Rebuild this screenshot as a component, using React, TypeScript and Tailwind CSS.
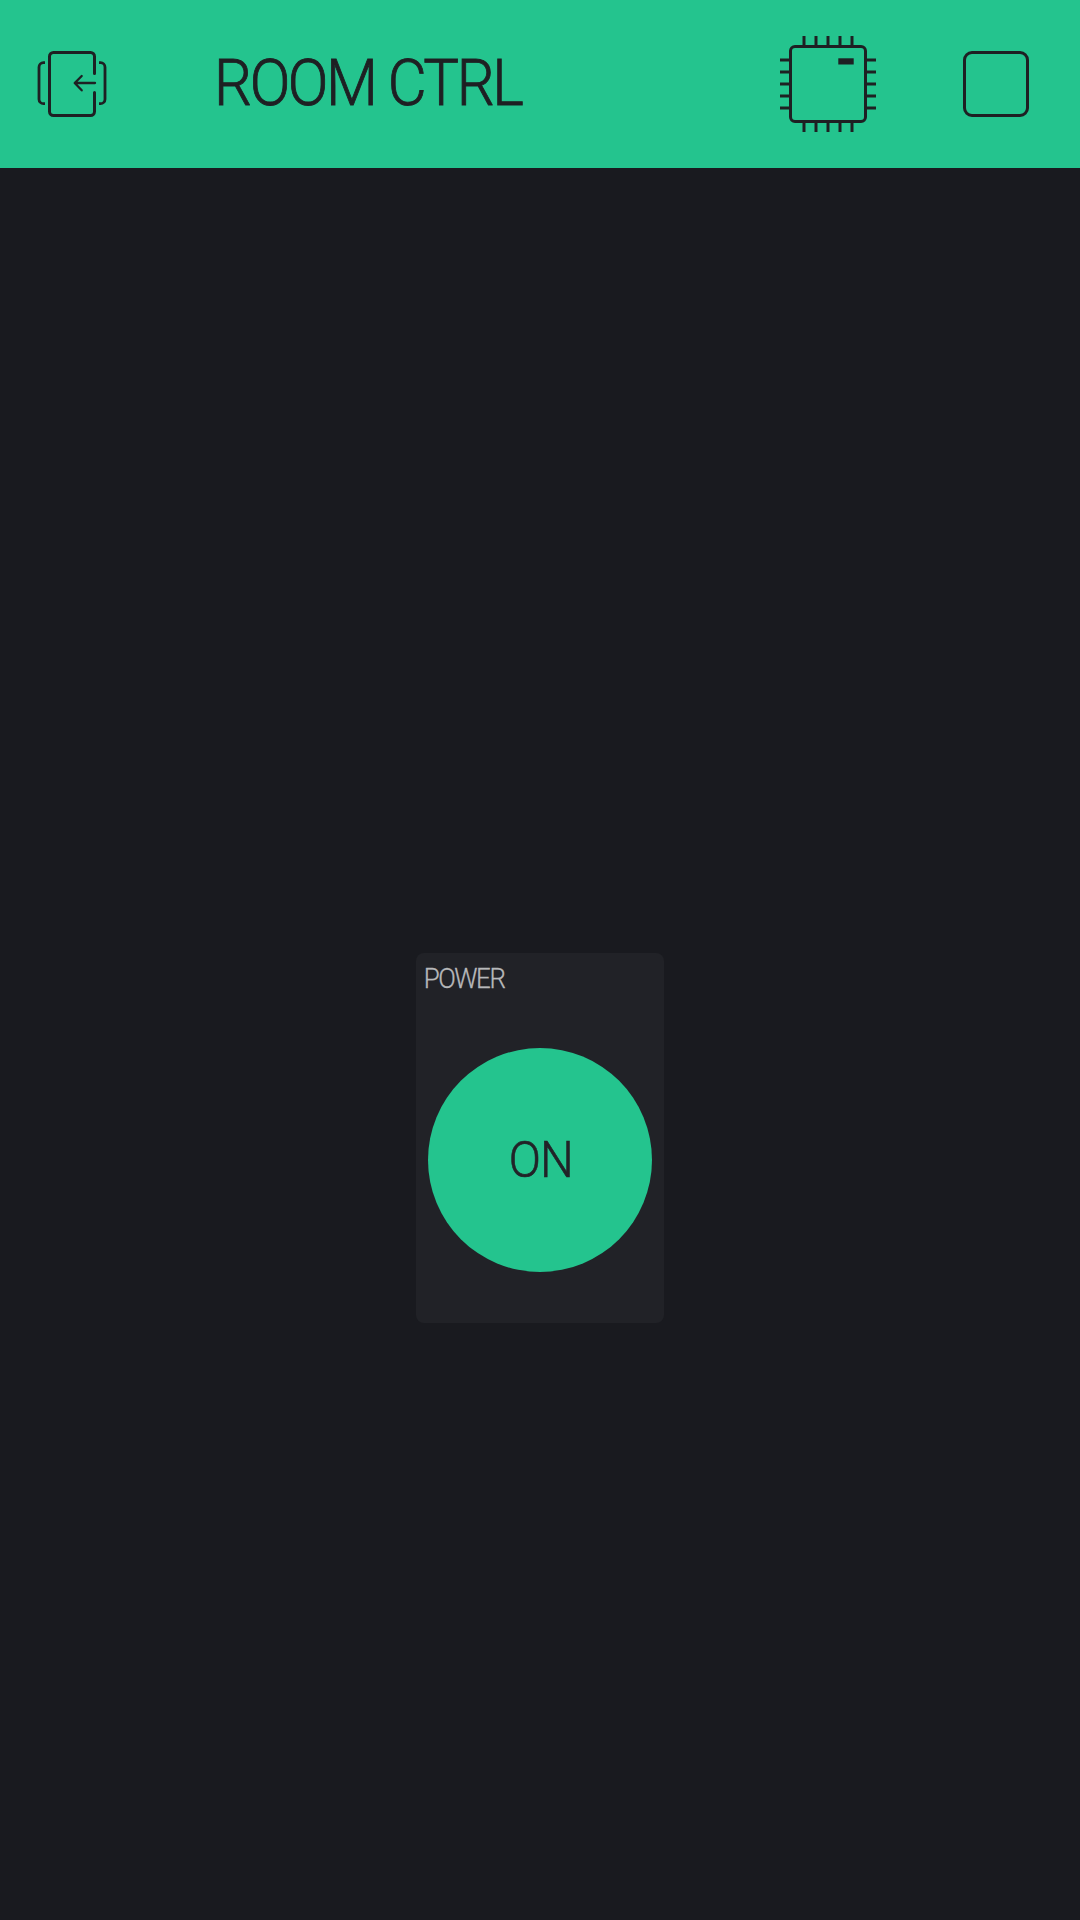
import React from "react";

function ExitIcon() {
  return (
    <svg width="72" height="68" viewBox="36 50 72 68" fill="none" stroke="#1e2023" strokeLinecap="round" strokeLinejoin="round">
      <path strokeWidth="3" d="M94.5 73.5V56.5a4 4 0 0 0-4-4h-37a4 4 0 0 0-4 4v55a4 4 0 0 0 4 4h37a4 4 0 0 0 4-4V92.500" />
      <path strokeWidth="2.800" strokeLinecap="butt" d="M45 62.700h-1.500a4.500 4.500 0 0 0-4.500 4.500v32a4.500 4.500 0 0 0 4.500 4.500H45M99 62.700h1.500a4.500 4.500 0 0 1 4.500 4.500v32a4.500 4.500 0 0 1-4.500 4.500H99" />
      <path strokeWidth="2.300" d="M95 83H75M81.700 76l-7 7 7 7.300" />
    </svg>
  );
}

function ChipIcon() {
  return (
    <svg width="96" height="96" viewBox="780 36 96 96" fill="none" stroke="#1e2023" strokeWidth="3">
      <rect x="790.5" y="46.500" width="75" height="75" rx="4.500" />
      <path d="M804 36v9M816 36v9M828 36v9M840 36v9M852 36v9M804 123v9M816 123v9M828 123v9M840 123v9M852 123v9M780 60h9M780 72h9M780 84h9M780 96h9M780 108h9M867 60h9M867 72h9M867 84h9M867 96h9M867 108h9" />
      <rect x="838.300" y="58.300" width="15.400" height="6.200" fill="#1e2023" stroke="none" />
    </svg>
  );
}

export default function App() {
  return (
    <div className="flex h-[1920px] w-[1080px] flex-col overflow-hidden bg-[#191a1f] font-[Roboto,sans-serif]">
      <header className="flex h-[168px] shrink-0 items-center bg-[#24c48e] pl-9 text-[#1e2023]">
        <button aria-label="Exit" className="w-[72px]">
          <ExitIcon />
        </button>
        <h1 className="ml-[106px] w-[566px] origin-left scale-x-[0.937] pb-px text-[64px] leading-none font-light tracking-[-2.6px] whitespace-nowrap [-webkit-text-stroke:0.9px_#1e2023]">
          ROOM CTRL
        </h1>
        <button aria-label="Device" className="w-24">
          <ChipIcon />
        </button>
        <button aria-label="Stop" className="ml-[87px] size-[66px] rounded-[9px] border-3 border-[#1e2023]" />
      </header>
      <main className="flex justify-center pt-[785px]">
        <section className="flex h-[370px] w-[248px] flex-col items-center rounded-lg bg-[#212227]">
          <h2 className="mt-[13px] h-[82px] w-full origin-left scale-x-[0.96] pl-[8px] text-[27px] leading-[27px] font-light tracking-[-1.5px] text-[#b7b8ba] [-webkit-text-stroke:0.3px_#b7b8ba]">
            POWER
          </h2>
          <button className="flex size-[224px] items-center justify-center rounded-full bg-[#24c48e] text-[50px] leading-none font-light tracking-[-1px] text-[#222328] [-webkit-text-stroke:0.6px_#222328]">
            <span className="block origin-center scale-x-[0.95] pl-px">ON</span>
          </button>
        </section>
      </main>
    </div>
  );
}
